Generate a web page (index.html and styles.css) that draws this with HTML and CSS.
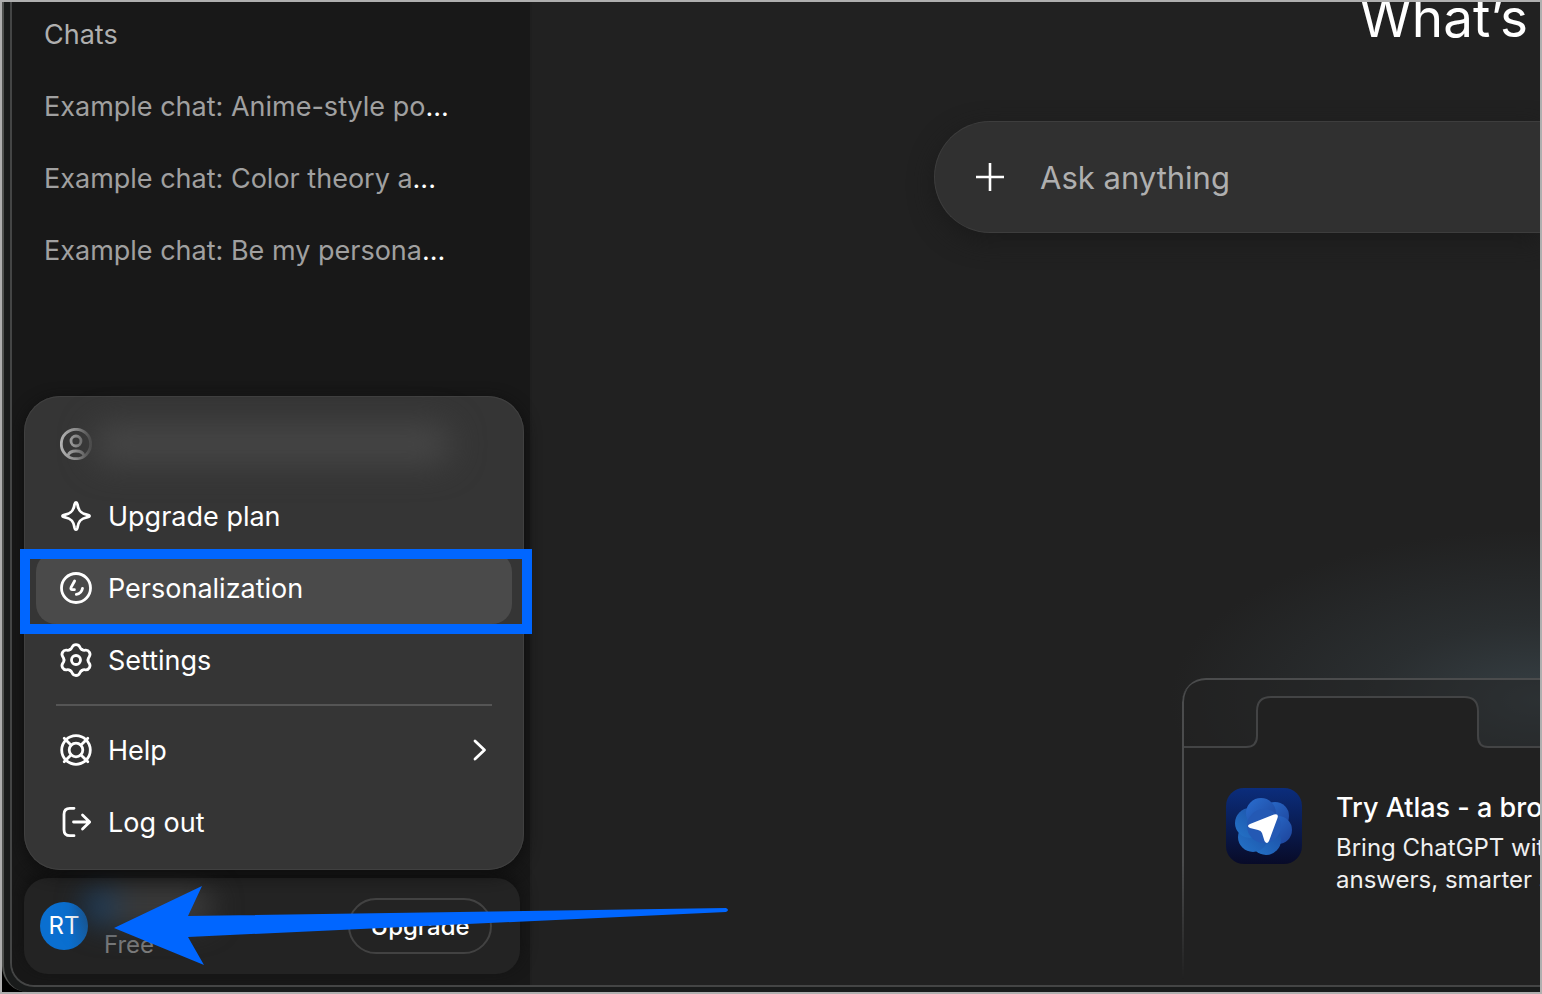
FILE: index.html
```html
<!DOCTYPE html>
<html lang="en">
<head>
    <meta charset="UTF-8">
    <meta name="viewport" content="width=device-width, initial-scale=1.0">
    <title>ChatGPT</title>
    <link rel="stylesheet" href="styles.css">
</head>
<body>
    <div class="window">
        <div class="app">
            <aside class="sidebar">
                <h2 class="sidebar-title">Chats</h2>
                <nav class="chat-list">
                    <a href="#" class="chat-link">Example chat: Anime-style po<span class="dots">...</span></a>
                    <a href="#" class="chat-link">Example chat: Color theory a<span class="dots">...</span></a>
                    <a href="#" class="chat-link">Example chat: Be my persona<span class="dots">...</span></a>
                </nav>

                <div class="account">
                    <div class="profile">
                        <div class="avatar">RT</div>
                        <div class="profile-text">
                            <div class="profile-name"></div>
                            <div class="profile-plan">Free</div>
                        </div>
                        <button type="button" class="upgrade-button">Upgrade</button>
                    </div>

                    <!-- Account menu -->
                    <div class="menu">
                        <div class="menu-item menu-email">
                            <svg class="icon icon-user" viewBox="0 0 32 32">
                                <defs>
                                    <linearGradient id="userFade" gradientUnits="userSpaceOnUse" x1="0" y1="0" x2="32" y2="0">
                                        <stop offset="0" stop-color="#b4b4b4"/>
                                        <stop offset="0.5" stop-color="#909090"/>
                                        <stop offset="1" stop-color="#4a4a4a"/>
                                    </linearGradient>
                                </defs>
                                <circle cx="16" cy="16" r="14.7"/>
                                <circle cx="16" cy="13" r="5"/>
                                <path d="M8 27.5C10 21.5 22 21.5 24 27.5"/>
                            </svg>
                            <div class="email-blur"></div>
                        </div>
                        <button type="button" class="menu-item">
                            <svg class="icon" viewBox="0 0 32 32"><path d="M16 2.5C17 2.5 17.2 3.3 17.4 4.2C18.3 10.5 20.6 13.4 26.8 14.6C30.4 15.3 30.4 16.7 26.8 17.4C20.6 18.6 18.3 21.5 17.4 27.8C16.9 30.3 15.1 30.3 14.6 27.8C13.7 21.5 11.4 18.6 5.2 17.4C1.6 16.7 1.6 15.3 5.2 14.6C11.4 13.4 13.7 10.5 14.6 4.2C14.8 3.3 15 2.5 16 2.5Z"/></svg>
                            <span>Upgrade plan</span>
                        </button>
                        <button type="button" class="menu-item active">
                            <svg class="icon" viewBox="0 0 32 32">
                                <circle cx="16" cy="16" r="14.5"/>
                                <path d="M14.6 9L11.2 15.2C10.4 16.8 11 17.6 12.5 17.7H14.4M22.5 16.3C21.9 19.6 19.8 21.9 16.3 22.4"/>
                            </svg>
                            <span>Personalization</span>
                        </button>
                        <button type="button" class="menu-item">
                            <svg class="icon icon-gear" viewBox="0 0 32 32">
                                <defs>
                                    <path id="tooth" d="M10 5.6C11.2 5.1 11.7 4.2 12.2 3C13.6 -.3 18.4 -.3 19.8 3C20.3 4.2 20.8 5.1 22 5.6"/>
                                </defs>
                                <use href="#tooth"/>
                                <use href="#tooth" transform="rotate(60 16 16)"/>
                                <use href="#tooth" transform="rotate(120 16 16)"/>
                                <use href="#tooth" transform="rotate(180 16 16)"/>
                                <use href="#tooth" transform="rotate(240 16 16)"/>
                                <use href="#tooth" transform="rotate(300 16 16)"/>
                                <circle cx="16" cy="16" r="4.5"/>
                            </svg>
                            <span>Settings</span>
                        </button>
                        <hr class="menu-line">
                        <button type="button" class="menu-item">
                            <svg class="icon" viewBox="0 0 32 32">
                                <circle cx="16" cy="16" r="14.3"/>
                                <circle cx="16" cy="16" r="6.8"/>
                                <path d="M4.2 4.2L11 11M27.8 4.2L21 11M4.2 27.8L11 21M27.8 27.8L21 21"/>
                            </svg>
                            <span>Help</span>
                            <svg class="chevron" viewBox="0 0 16 24"><path d="M3 3L12.5 12L3 21"/></svg>
                        </button>
                        <button type="button" class="menu-item">
                            <svg class="icon" viewBox="0 0 32 32"><path d="M14 2.3H10C6 2.3 4 4.3 4 8.3V23.7C4 27.7 6 29.7 10 29.7H14M13.5 16H29.5M22.5 9L29.7 16L22.5 23"/></svg>
                            <span>Log out</span>
                        </button>
                    </div>

                    <!-- Pointer to the profile -->
                    <svg class="arrow" viewBox="0 0 616 80"><path d="M0 42L88 0L74 30L612 22Q616 24 612 26L74 51L90 79Z"/></svg>
                </div>
            </aside>

            <main class="main">
                <h1 class="headline">What’s</h1>
                <div class="composer">
                    <button type="button" class="plus-button" aria-label="Add">
                        <svg viewBox="0 0 32 32"><path d="M16 2V30M2 16H30"/></svg>
                    </button>
                    <input type="text" class="composer-input" placeholder="Ask anything" aria-label="Ask anything">
                </div>

                <section class="promo">
                    <svg class="promo-tab" viewBox="0 0 360 70">
                        <path class="tab-fill" d="M0 67H64Q75 67 75 56V31Q75 17 89 17H282Q296 17 296 31V56Q296 67 306 67H360V70H0Z"/>
                        <path class="tab-line" d="M0 67H64Q75 67 75 56V31Q75 17 89 17H282Q296 17 296 31V56Q296 67 306 67H360"/>
                    </svg>
                    <div class="promo-body">
                        <svg class="atlas-logo" viewBox="0 0 76 76">
                            <defs>
                                <linearGradient id="tile" x1="0" y1="0" x2="0" y2="1">
                                    <stop offset="0" stop-color="#0b2d7c"/>
                                    <stop offset="1" stop-color="#080b28"/>
                                </linearGradient>
                                <linearGradient id="petal" x1="0" y1="0" x2="1" y2="1">
                                    <stop offset="0" stop-color="#2a6fd0"/>
                                    <stop offset="1" stop-color="#1d4298"/>
                                </linearGradient>
                                <linearGradient id="petalLow" x1="0" y1="1" x2="1" y2="0">
                                    <stop offset="0" stop-color="#2474c8"/>
                                    <stop offset="1" stop-color="#1c4da4"/>
                                </linearGradient>
                            </defs>
                            <rect width="76" height="76" rx="18" fill="url(#tile)"/>
                            <g fill="url(#petal)">
                                <circle cx="49" cy="28" r="14"/>
                                <circle cx="52" cy="42" r="14"/>
                                <circle cx="40" cy="52" r="15" fill="url(#petalLow)"/>
                                <circle cx="27" cy="49" r="15" fill="url(#petalLow)"/>
                                <circle cx="24" cy="35" r="15" fill="url(#petalLow)"/>
                                <circle cx="35" cy="25" r="15"/>
                                <circle cx="38" cy="38" r="17" fill="#2459b4"/>
                            </g>
                            <path d="M24 36L48 26.5Q53 25 51.5 30L43 53Q41 57 38.5 53L36 45Q35 42.5 32 42L24 40Q20 38 24 36Z" fill="#fff"/>
                        </svg>
                        <div class="promo-text">
                            <h3 class="promo-title">Try Atlas - a bro</h3>
                            <p class="promo-copy">Bring ChatGPT wit<br>answers, smarter s</p>
                        </div>
                    </div>
                </section>
            </main>
        </div>
    </div>
</body>
</html>
```
FILE: styles.css
```css
* {
    box-sizing: border-box;
}

html {
    background: #afafaf;
}

body {
    margin: 0;
    height: 100vh;
    overflow: hidden;
    border: 2px solid #afafaf;
    background: #000000;
    color: #ffffff;
    font-family: Inter, "Liberation Sans", sans-serif;
    font-size: 27px;
}

h1, h2, h3, p {
    margin: 0;
    font-weight: 400;
}

button, input {
    font: inherit;
    color: inherit;
    border: 0;
    background: none;
}

button {
    cursor: pointer;
}

svg {
    display: block;
    fill: none;
}

.window {
    height: 100%;
    padding: 0 0 5px 6px;
    border-left: 2px solid #505250;
    border-bottom-left-radius: 26px;
    background: #191b1b;
}

.app {
    display: grid;
    grid-template-columns: 520px 1fr;
    height: 100%;
    overflow: hidden;
    border-left: 2px solid #444545;
    border-bottom: 2px solid #444545;
    border-bottom-left-radius: 24px;
    background: #212121;
}

/* Sidebar */
.sidebar {
    display: flex;
    flex-direction: column;
    min-width: 0;
    padding: 0 10px 11px 12px;
    border-right: 2px solid #1f1f1f;
    background: #181818;
}

.sidebar-title {
    padding: 0 20px 2px;
    font-size: 27px;
    line-height: 66px;
    color: #afafaf;
}

.chat-list {
    display: flex;
    flex-direction: column;
    padding-top: 1px;
}

.chat-link {
    padding: 0 20px;
    line-height: 72px;
    white-space: nowrap;
    text-decoration: none;
    color: #a0a0a0;
}

.dots {
    color: #ffffff;
}

.account {
    position: relative;
    margin-top: auto;
}

.profile {
    display: flex;
    align-items: center;
    gap: 16px;
    height: 96px;
    padding: 0 28px 0 16px;
    border-radius: 24px;
    background: #232323;
    box-shadow: 0 -6px 16px #101010;
}

.avatar {
    width: 48px;
    height: 48px;
    border-radius: 50%;
    background: linear-gradient(90deg, #0a6fd0 60%, #1560a8);
    font-size: 24px;
    line-height: 48px;
    text-align: center;
}

.profile-text {
    flex: 1;
    font-size: 24px;
    line-height: 38px;
    color: #7c7c7c;
}

.profile-name {
    width: 130px;
    height: 38px;
    margin-left: -20px;
    border-radius: 20px;
    background: linear-gradient(90deg, #12406e, #3c3c3c 35%);
    filter: blur(14px);
}

.upgrade-button {
    width: 144px;
    height: 56px;
    padding: 0;
    border: 2px solid #424242;
    border-radius: 28px;
    font-size: 24px;
    font-weight: 500;
}

/* Account menu */
.menu {
    position: absolute;
    left: 0;
    bottom: calc(100% + 8px);
    width: 500px;
    padding: 12px;
    border-radius: 36px;
    background: #353535;
    box-shadow: inset 0 0 0 1px #404040, 0 4px 16px #0e0e0e;
}

.menu-item {
    position: relative;
    display: flex;
    align-items: center;
    gap: 16px;
    width: 100%;
    height: 72px;
    padding: 0 24px;
    border-radius: 20px;
    text-align: left;
}

.menu-email {
    gap: 0;
}

.menu-item.active {
    background: #4a4a4a;
}

.menu-item.active::after {
    content: "";
    position: absolute;
    inset: -3px -20px -10px -16px;
    border: 10px solid #0066ff;
}

.icon {
    flex: none;
    width: 32px;
    height: 32px;
    stroke: #ffffff;
    stroke-width: 2.8;
    stroke-linecap: round;
    stroke-linejoin: round;
}

.icon-user {
    stroke: url(#userFade);
}

.icon-gear {
    overflow: visible;
}

.email-blur {
    flex: 1;
    height: 40px;
    margin-right: 36px;
    border-radius: 20px;
    background: #464646;
    filter: blur(16px);
}

.chevron {
    width: 16px;
    height: 24px;
    margin-left: auto;
    stroke: #ffffff;
    stroke-width: 2.8;
    stroke-linecap: round;
    stroke-linejoin: round;
}

.menu-line {
    height: 2px;
    margin: 8px 20px;
    border: 0;
    background: #555555;
}

.arrow {
    position: absolute;
    top: 8px;
    left: 90px;
    z-index: 2;
    width: 616px;
    height: 80px;
    fill: #0066ff;
    pointer-events: none;
}

/* Main area */
.main {
    display: flex;
    flex-direction: column;
    min-width: 0;
    overflow: hidden;
    background: radial-gradient(ellipse 370px 170px at 100% 71%, #363f44, #2a2e30 45%, #212121);
}

.headline {
    height: 119px;
    padding-right: 12px;
    font-size: 53px;
    line-height: 32px;
    text-align: right;
}

.composer {
    display: flex;
    align-items: center;
    gap: 34px;
    height: 112px;
    margin-left: 402px;
    padding-left: 39px;
    border: 1px solid #3d3d3d;
    border-right: 0;
    border-radius: 56px 0 0 56px;
    background: #303030;
    box-shadow: 0 8px 24px #1b1b1b;
}

.plus-button {
    width: 32px;
    height: 32px;
    padding: 0;
}

.plus-button svg {
    stroke: #ffffff;
    stroke-width: 2.6;
}

.composer-input {
    flex: 1;
    min-width: 0;
    padding: 0;
    font-size: 31px;
    outline: none;
}

.composer-input::placeholder {
    color: #afafaf;
    opacity: 1;
}

/* Atlas card */
.promo {
    position: relative;
    height: 307px;
    margin-top: auto;
    margin-left: 650px;
    overflow: hidden;
    border-top: 2px solid #4b4c4d;
    border-top-left-radius: 24px;
    background: rgba(33, 33, 33, 0.5);
}

/* left edge fades out towards the bottom */
.promo::before {
    content: "";
    position: absolute;
    inset: -2px auto 0 0;
    width: 30px;
    border-left: 2px solid #4b4c4d;
    border-top-left-radius: 24px;
    -webkit-mask-image: linear-gradient(#000 60%, transparent 98%);
    mask-image: linear-gradient(#000 60%, transparent 98%);
}

.promo-tab {
    width: 360px;
    height: 70px;
}

.tab-fill {
    fill: #212121;
}

.tab-line {
    stroke: #434445;
    stroke-width: 2;
}

.promo-body {
    display: flex;
    gap: 34px;
    height: 100%;
    padding: 38px 0 0 44px;
    background: #212121;
}

.atlas-logo {
    flex: none;
    width: 76px;
    height: 76px;
}

.promo-text {
    white-space: nowrap;
}

.promo-title {
    margin-bottom: 4px;
    font-size: 27px;
    font-weight: 500;
    line-height: 40px;
}

.promo-copy {
    font-size: 24px;
    line-height: 32px;
    color: #f0f0f0;
}
```
